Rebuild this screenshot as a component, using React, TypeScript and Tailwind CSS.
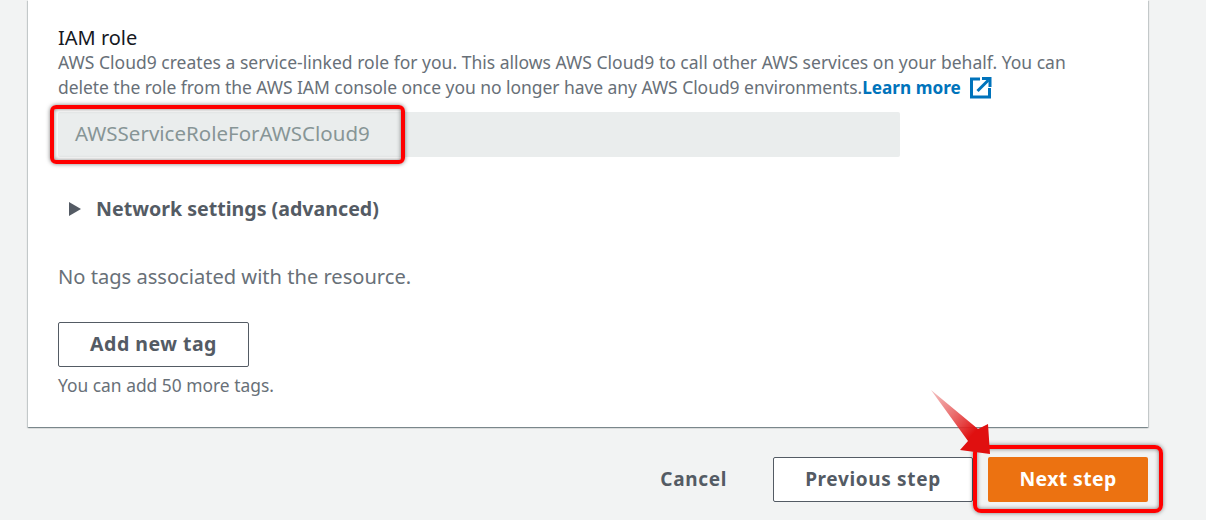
export default function App() {
  return (
    <div className="relative w-[1206px] h-[520px] overflow-hidden bg-[#f2f3f3] font-['Noto_Sans',sans-serif] text-[#545b64]">
      <div className="ml-[28px] w-[1120px] h-[427px] bg-white shadow-[0_1px_1px_0_rgba(0,28,36,0.3),1px_1px_1px_0_rgba(0,28,36,0.15),-1px_1px_1px_0_rgba(0,28,36,0.15)] pl-[30px] pt-[26px]">
        <div className="text-[20px] leading-[24px] text-[#16191f]">IAM role</div>
        <div className="w-[1030px] text-[17.5px] leading-[25px] text-[#687078]">
          <p className="whitespace-nowrap tracking-[0.01px]">AWS Cloud9 creates a service-linked role for you. This allows AWS Cloud9 to call other AWS services on your behalf. You can</p>
          <p className="whitespace-nowrap flex items-center">
            <span className="tracking-[-0.055px]">delete the role from the AWS IAM console once you no longer have any AWS Cloud9 environments.</span>
            <span className="font-bold text-[17.2px] text-[#0073bb]">Learn more</span>
            <svg className="ml-[8px]" width="23" height="23" viewBox="0 0 23 23" fill="none" stroke="#0073bb" strokeWidth="3">
              <path d="M11 3H2.5v18h18v-9" />
              <path d="M8.5 15L19.5 4" />
              <path d="M13 2.5h8V11" />
            </svg>
          </p>
        </div>
        <div className="mt-[12px] w-[842px] h-[45px] bg-[#eaeded] rounded-[2px] pl-[17px] pb-[2px] flex items-center text-[20.5px] text-[#879596]">AWSServiceRoleForAWSCloud9</div>
        <div className="mt-[37px] ml-[11px] flex items-center h-[30px] gap-[15px]">
          <svg width="12" height="14" viewBox="0 0 12 14"><path d="M0 0L12 7L0 14Z" fill="#545b64" /></svg>
          <span className="text-[19.6px] font-bold">Network settings (advanced)</span>
        </div>
        <div className="mt-[41px] text-[20.1px] leading-[24px] text-[#687078]">No tags associated with the resource.</div>
        <button className="mt-[33px] block w-[191px] h-[45px] pb-[2px] border border-[#545b64] rounded-[2px] bg-white text-[19.5px] font-bold tracking-[0.5px]">Add new tag</button>
        <div className="mt-[8px] text-[17.4px] leading-[20px] text-[#687078]">You can add 50 more tags.</div>
      </div>
      <div className="mt-[30px] ml-[28px] w-[1120px] flex items-center justify-end">
        <span className="text-[19px] font-bold tracking-[0.65px] mr-[46px]">Cancel</span>
        <button className="w-[200px] h-[45px] border border-[#545b64] rounded-[2px] bg-white text-[19px] font-bold tracking-[0.65px] mr-[15px]">Previous step</button>
        <button className="w-[160px] h-[45px] pb-[2px] rounded-[2px] bg-[#ec7211] text-white text-[19.4px] font-bold tracking-[0.4px]">Next step</button>
      </div>
      <div className="absolute left-[50px] top-[105px] w-[355px] h-[59px] border-[4px] border-[#ff0000] rounded-[6px] shadow-[0_0_4px_rgba(0,0,0,0.5),inset_0_0_4px_rgba(0,0,0,0.5)]" />
      <div className="absolute left-[973px] top-[445px] w-[190px] h-[68px] border-[4px] border-[#ff0000] rounded-[8px] shadow-[0_0_4px_rgba(0,0,0,0.5),inset_0_0_4px_rgba(0,0,0,0.5)]" />
      <svg className="absolute left-[925px] top-[385px]" width="75" height="70" viewBox="0 0 75 70">
        <defs>
          <linearGradient id="arrowFill" x1="0" y1="0" x2="1" y2="1">
            <stop offset="0" stopColor="#e88080" stopOpacity="0.5" />
            <stop offset="0.7" stopColor="#e01010" />
          </linearGradient>
        </defs>
        <path d="M6 5L53 44L63 39L65 69L35 65L43 56Z" fill="url(#arrowFill)" />
      </svg>
    </div>
  );
}
